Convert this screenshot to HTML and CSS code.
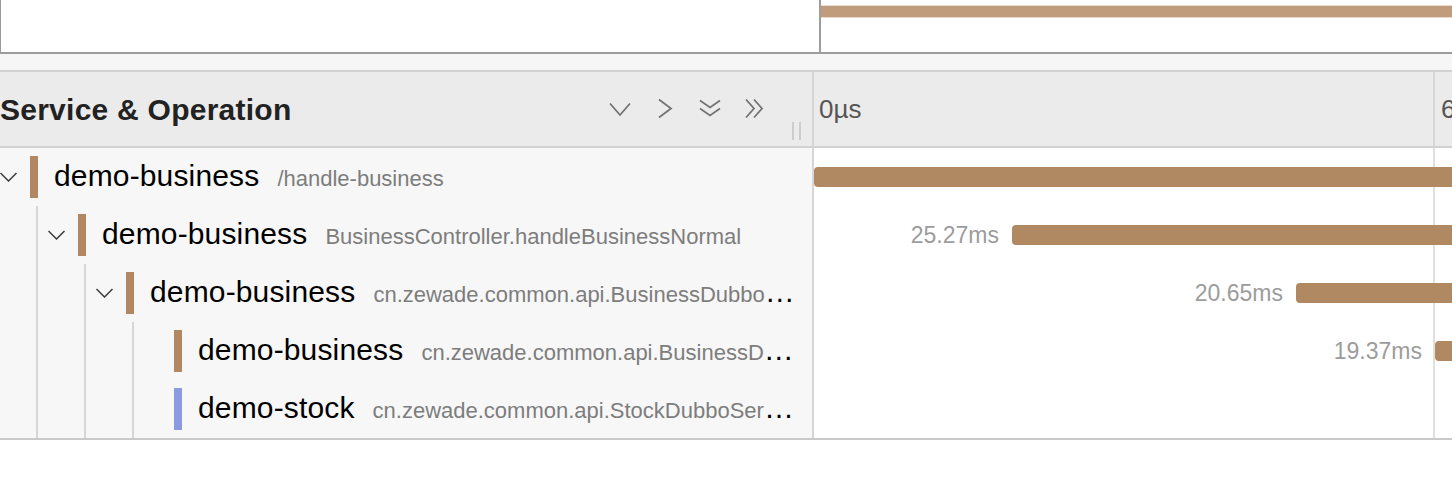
FILE: index.html
```html
<!DOCTYPE html>
<html>
<head>
<meta charset="utf-8">
<link rel="stylesheet" href="styles.css">
</head>
<body>
<div class="minimap">
  <div class="mm-left"></div>
  <div class="mm-right"><div class="mm-bar"></div></div>
</div>
<div class="spacer"></div>
<div class="header">
  <div class="hdr-left">
    <h3 class="title">Service &amp; Operation</h3>
    <div class="tools">
      <svg class="tool" width="22" height="22" viewBox="0 0 22 22"><path d="M1 5.5 L11 17 L21 5.5"/></svg>
      <svg class="tool" width="22" height="22" viewBox="0 0 22 22"><path d="M5 1.5 L17 10.5 L5 19.5"/></svg>
      <svg class="tool" width="22" height="22" viewBox="0 0 22 22"><path d="M1 2.5 L11 9.5 L21 2.5 M1 10.5 L11 17.5 L21 10.5"/></svg>
      <svg class="tool" width="22" height="22" viewBox="0 0 22 22"><path d="M2 1.5 L10 10.5 L2 19.5 M10 1.5 L18 10.5 L10 19.5"/></svg>
    </div>
    <div class="resizer"></div>
  </div>
  <div class="hdr-right">
    <div class="tick first">0µs</div>
    <div class="tick">6</div>
  </div>
</div>
<div class="rows">
  <div class="row">
    <div class="tree">
      <span class="toggle"><svg width="17" height="10" viewBox="0 0 17 10"><path d="M0.5 1 L8.5 9 L16.5 1"/></svg></span>
      <span class="svc-bar brown"></span>
      <span class="label">demo-business<span class="op">/handle-business</span></span>
    </div>
    <div class="timeline" style="padding-left:0px"><span class="bar"></span></div>
  </div>
  <div class="row">
    <div class="tree">
      <span class="indent"></span>
      <span class="toggle"><svg width="17" height="10" viewBox="0 0 17 10"><path d="M0.5 1 L8.5 9 L16.5 1"/></svg></span>
      <span class="svc-bar brown"></span>
      <span class="label">demo-business<span class="op">BusinessController.handleBusinessNormal</span></span>
    </div>
    <div class="timeline" style="padding-left:185px"><span class="dur">25.27ms</span><span class="bar"></span></div>
  </div>
  <div class="row">
    <div class="tree">
      <span class="indent"></span><span class="indent"></span>
      <span class="toggle"><svg width="17" height="10" viewBox="0 0 17 10"><path d="M0.5 1 L8.5 9 L16.5 1"/></svg></span>
      <span class="svc-bar brown"></span>
      <span class="label">demo-business<span class="op">cn.zewade.common.api.BusinessDubboService/handleBusiness</span></span>
    </div>
    <div class="timeline" style="padding-left:469px"><span class="dur">20.65ms</span><span class="bar"></span></div>
  </div>
  <div class="row">
    <div class="tree">
      <span class="indent"></span><span class="indent"></span><span class="indent"></span>
      <span class="toggle"></span>
      <span class="svc-bar brown"></span>
      <span class="label">demo-business<span class="op">cn.zewade.common.api.BusinessDubboService/handleBusiness</span></span>
    </div>
    <div class="timeline" style="padding-left:608px"><span class="dur">19.37ms</span><span class="bar"></span></div>
  </div>
  <div class="row">
    <div class="tree">
      <span class="indent"></span><span class="indent"></span><span class="indent"></span>
      <span class="toggle"></span>
      <span class="svc-bar blue"></span>
      <span class="label">demo-stock<span class="op">cn.zewade.common.api.StockDubboService/reduceStock</span></span>
    </div>
    <div class="timeline"></div>
  </div>
</div>
</body>
</html>
```

FILE: styles.css
```css
html, body {
  margin: 0;
  padding: 0;
}
body {
  width: 1452px;
  overflow: hidden;
  background: #fff;
  font-family: "Liberation Sans", Arial, sans-serif;
}

/* minimap */
.minimap {
  display: flex;
  height: 52px;
  border-left: 1px solid #999;
  border-bottom: 2px solid #9d9d9d;
}
.mm-left {
  flex: none;
  width: 818px;
  border-right: 2px solid #9d9d9d;
}
.mm-right {
  flex: 1;
  padding-top: 5px;
  overflow: hidden;
}
.mm-bar {
  height: 11px;
  background: #c09c7c;
  border-top: 1px solid #ecdccd;
  border-bottom: 1px solid #ecdccd;
}
.spacer {
  height: 16px;
  background: #f6f6f6;
}

/* header */
.header {
  display: flex;
  height: 74px;
  background: #ebebeb;
  border-top: 2px solid #d2d2d2;
  border-bottom: 2px solid #d2d2d2;
}
.hdr-left {
  flex: none;
  width: 812px;
  box-sizing: border-box;
  display: flex;
  align-items: center;
  padding-right: 11px;
}
.title {
  flex: 1;
  margin: 2px 0 0;
  font-size: 30px;
  letter-spacing: 0.25px;
  font-weight: 700;
  color: #222;
  white-space: nowrap;
}
.tools {
  display: flex;
  align-items: center;
  gap: 23px;
  margin-right: -2px;
}
.tool path {
  fill: none;
  stroke: #737373;
  stroke-width: 1.8;
}
.resizer {
  align-self: flex-end;
  margin: 0 0 6px 28px;
  width: 9px;
  height: 18px;
  box-sizing: border-box;
  border-left: 2px solid #cdcdcd;
  border-right: 2px solid #cdcdcd;
}
.hdr-right {
  flex: 1;
  display: flex;
  border-left: 2px solid #d6d6d6;
  overflow: hidden;
  font-size: 26px;
  color: #555;
}
.tick {
  display: flex;
  align-items: center;
  padding-left: 6px;
  border-left: 2px solid #d6d6d6;
  white-space: nowrap;
}
.tick.first {
  flex: none;
  width: 619px;
  box-sizing: border-box;
  padding-left: 5px;
  border-left: none;
}

/* rows */
.rows {
  border-bottom: 2px solid #c9c9c9;
}
.row {
  display: flex;
  height: 58px;
}
.tree {
  flex: none;
  width: 812px;
  box-sizing: border-box;
  display: flex;
  align-items: stretch;
  padding-right: 8px;
  background: #f7f7f7;
}
.indent {
  flex: none;
  width: 36px;
  margin-right: 10px;
  border-right: 2px solid #d6d6d6;
}
.toggle {
  flex: none;
  width: 30px;
  display: flex;
  align-items: center;
}
.toggle path {
  fill: none;
  stroke: #3a3a3a;
  stroke-width: 1.5;
}
.svc-bar {
  flex: none;
  width: 8px;
  margin: 8px 16px 8px 0;
}
.brown { background: #b08963; }
.blue { background: #8a9be0; }
.label {
  flex: 1;
  min-width: 0;
  align-self: center;
  overflow: hidden;
  white-space: nowrap;
  text-overflow: ellipsis;
  font-size: 30px;
  letter-spacing: 0.15px;
  line-height: 36px;
  color: #000;
}
.op {
  margin-left: 18px;
  font-size: 22px;
  letter-spacing: 0;
  color: #7d7d7d;
}
.timeline {
  flex: 1;
  display: flex;
  align-items: center;
  overflow: hidden;
  border-left: 2px solid #d6d6d6;
  background: linear-gradient(to right, transparent 619px, #e0e0e0 619px, #e0e0e0 621px, transparent 621px) no-repeat;
}
.dur {
  flex: none;
  width: 0;
  margin-right: 13px;
  display: flex;
  justify-content: flex-end;
  white-space: nowrap;
  font-size: 23px;
  color: #9c9c9c;
}
.bar {
  flex: none;
  width: 1400px;
  height: 20px;
  border-radius: 4px;
  background: #b08963;
}
```
